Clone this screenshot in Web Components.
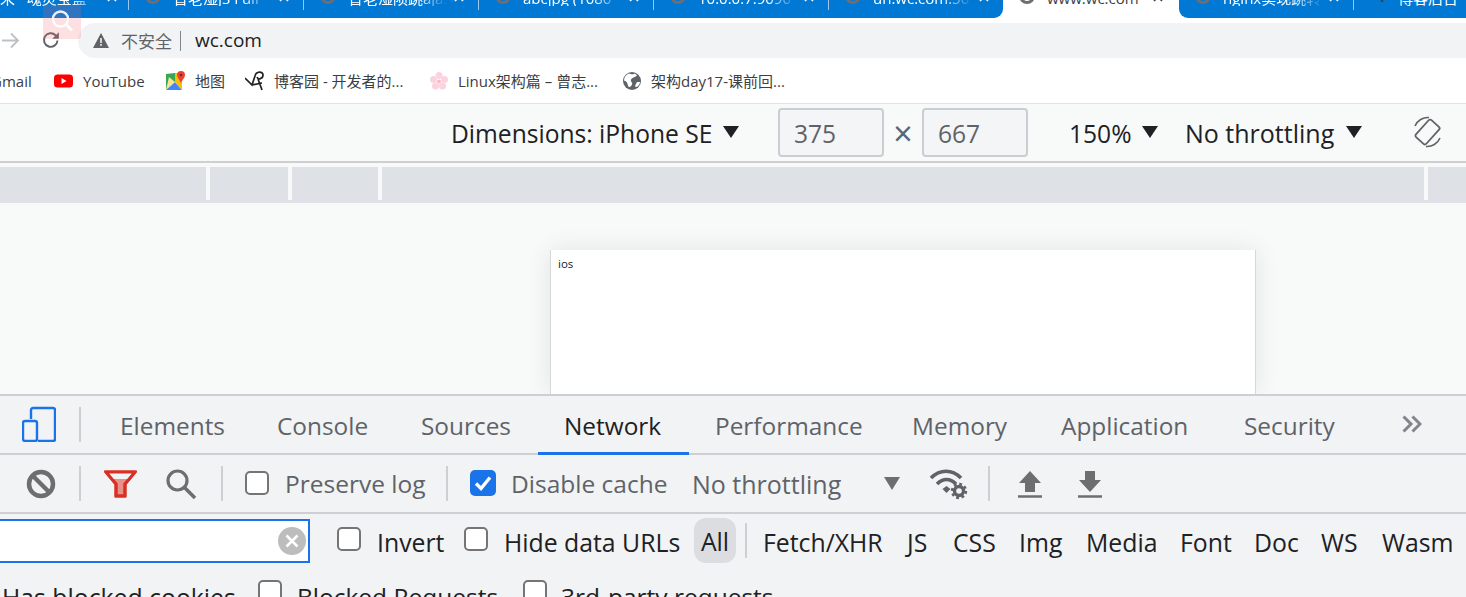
<!DOCTYPE html>
<html>
<head>
<meta charset="utf-8">
<title>DevTools</title>
<style>
  html, body { margin: 0; height: 597px; overflow: hidden; background: #fff; }
  body { font-family: "Open Sans", "Noto Sans CJK SC", sans-serif; }
</style>
</head>
<body>
<browser-tabs></browser-tabs>
<browser-toolbar></browser-toolbar>
<bookmark-bar></bookmark-bar>
<device-bar></device-bar>
<media-ruler></media-ruler>
<emulated-viewport>ios</emulated-viewport>
<devtools-tabs></devtools-tabs>
<network-toolbar></network-toolbar>
<network-filter></network-filter>

<script>
"use strict";
(() => {
  var BaseControl = class extends HTMLElement {
    constructor() {
      super();
      this.shadow = this.attachShadow({ mode: "open" });
    }
    connectedCallback() {
      this.render();
    }
    render() {
    }
  };

  var GLOBE = '<svg width="16" height="16" viewBox="0 0 16 16"><circle cx="8" cy="8" r="6.5" fill="none" stroke="#6b6f73" stroke-width="3"/></svg>';
  var CLOSE = '<svg width="10" height="10" viewBox="0 0 10 10"><path d="M1 1l8 8M9 1l-8 8" stroke="currentColor" stroke-width="1.6"/></svg>';

  // tab strip, cut off at the top of the window
  var BrowserTabs = class extends BaseControl {
    render() {
      var tabs = [
        ["曾老湿JS Full", 0],
        ["曾老湿陨跳ajax", 0],
        ["abcjpg (1080", 0],
        ["10.0.0.7:9090", 0],
        ["un.wc.com:50", 1],
        ["www.wc.com", 2],
        ["nginx实现跳转", 3],
      ];
      var html = tabs.map(function (t) {
        var cls = t[1] === 1 ? "tab before" : t[1] === 2 ? "tab active" : t[1] === 3 ? "tab after" : "tab";
        var sep = t[1] === 0 || t[1] === 3 ? '<i class="sep"></i>' : "";
        return '<div class="' + cls + '"><span class="ic">' + GLOBE + '</span><span class="t">' + t[0] + '</span><span class="x">' + CLOSE + "</span></div>" + sep;
      }).join("");
      this.shadow.innerHTML = `
      <style>
        :host { display: flex; height: 18px; overflow: hidden; background: #fff; color: #fff; font-size: 15px; line-height: 15px; }
        .tab { flex: none; box-sizing: border-box; width: 174px; height: 18px; background: #0078d4; display: flex; align-items: flex-end; position: relative; padding-left: 16px; }
        .first { width: 128px; padding-left: 0; }
        .active { width: 176px; background: #fff; color: #3c4043; padding-left: 16px; }
        .before { width: 174px; border-bottom-right-radius: 9px; }
        .after { border-bottom-left-radius: 9px; }
        .ic { flex: none; width: 16px; margin-bottom: 14px; display: flex; }
        .t { flex: none; width: 99px; margin: 0 0 12px 12px; white-space: nowrap; overflow: hidden; -webkit-mask-image: linear-gradient(90deg, #000 70%, transparent); mask-image: linear-gradient(90deg, #000 70%, transparent); }
        .active .t { -webkit-mask-image: none; mask-image: none; }
        .first .t { width: 100px; margin-left: 0; }
        .x { flex: none; width: 10px; margin: 0 0 16px 7px; display: flex; }
        .sep { flex: none; width: 1px; height: 18px; background: linear-gradient(#9cc6ea 0 10px, #0078d4 10px); }
        .last { flex: 1; background: #0078d4; display: flex; align-items: flex-end; padding-left: 16px; }
        .last .t { -webkit-mask-image: none; mask-image: none; width: 70px; }
      </style>
      <div class="tab first"><span class="t">来&nbsp;&nbsp;&nbsp;魂灵宝盒</span><span class="x">${CLOSE}</span></div><i class="sep"></i>
      ${html}
      <div class="last"><span class="ic"><svg width="16" height="16" viewBox="0 0 16 16"><path d="M2 2l5 6 5-5v11" fill="none" stroke="#3c4043" stroke-width="2.4"/></svg></span><span class="t">博客后台</span></div>`;
    }
  };

  var BrowserToolbar = class extends BaseControl {
    render() {
      this.shadow.innerHTML = `
      <style>
        :host { display: flex; height: 40px; align-items: flex-end; position: relative; background: #fff; }
        .fwd { width: 19px; height: 19px; margin: 0 0 8px 1px; }
        .reload { width: 20px; height: 20px; margin: 0 0 8px 21px; }
        .omni { flex: 1; height: 35px; margin-left: 17px; padding-left: 15px; background: #f1f3f4; border-radius: 18px 0 0 18px; display: flex; align-items: center; }
        .warn { flex: none; width: 16px; height: 15px; }
        .ns { font-size: 17px; color: #5f6368; margin-left: 12px; white-space: nowrap; }
        .bar { width: 1px; height: 20px; background: #80868b; margin: 0 14px 0 8px; }
        .host { font-size: 19px; line-height: 24px; margin-top: -2px; color: #202124; }
        .ext { position: absolute; left: 43px; top: -13px; width: 38px; height: 34px; background: rgba(240, 100, 110, .2); border-radius: 3px; }
      </style>
      <svg class="fwd" viewBox="0 0 19 19"><path d="M1 9.5h16M10 2.5l7 7-7 7" fill="none" stroke="#bdc1c6" stroke-width="1.8"/></svg>
      <svg class="reload" viewBox="0 0 20 20"><path d="M16.5 10.5a6.8 6.8 0 1 1-2-5.3L17 7.5" fill="none" stroke="#5f6368" stroke-width="1.9"/><path d="M17.8 2.2v6.5h-6.5z" fill="#5f6368"/></svg>
      <div class="omni">
        <svg class="warn" viewBox="0 0 16 15"><path d="M8 0l8 15H0z" fill="#5f6368"/><path d="M7.2 5h1.6v5H7.200zM7.200 11h1.600v1.800H7.200z" fill="#f1f3f4"/></svg>
        <span class="ns">不安全</span><span class="bar"></span><span class="host">wc.com</span>
      </div>
      <svg class="ext" viewBox="0 0 38 34"><circle cx="17.500" cy="14" r="7.500" fill="none" stroke="#fff" stroke-opacity=".9" stroke-width="2.400"/><path d="M23 19.500l6 6" stroke="#fff" stroke-opacity=".9" stroke-width="3"/></svg>`;
    }
  };

  var BookmarkBar = class extends BaseControl {
    render() {
      this.shadow.innerHTML = `
      <style>
        :host { display: flex; box-sizing: border-box; height: 46px; align-items: center; background: #fff; border-bottom: 1px solid #e1e3e4; font-size: 15px; color: #3c4043; white-space: nowrap; overflow: hidden; }
        .b { flex: none; display: flex; align-items: center; }
        svg { flex: none; margin-right: 9px; }
      </style>
      <span class="b" style="margin-left:-9px;width:62px">Gmail</span>
      <span class="b" style="width:112px">
        <svg width="21" height="20" viewBox="0 0 21 20"><rect x="1" y="3.500" width="19" height="13" rx="3.500" fill="#f00"/><path d="M8.500 7v6l5-3z" fill="#fff"/></svg>YouTube</span>
      <span class="b" style="width:80px">
        <svg width="21" height="20" viewBox="0 0 21 20"><path d="M1 3l9-1v9l-9 8z" fill="#34a853"/><path d="M1 19l9-8 7 8z" fill="#4285f4"/><path d="M10 2h7v17l-7-8z" fill="#fbbc04"/><path d="M4 6l6 5-9 8z" fill="#fde293"/><path d="M16 0a4 4 0 0 1 4 4c0 3-3 5-4 8-1-3-4-5-4-8a4 4 0 0 1 4-4z" fill="#ea4335"/><circle cx="16" cy="4" r="1.300" fill="#8a1f16"/></svg>地图</span>
      <span class="b" style="width:184px">
        <svg width="20" height="20" viewBox="0 0 20 20"><path d="M0 7l7 7 3-9c1-5 8-5 8-1s-5 5-6 2M13 8l4 11M7 14l10-2" fill="none" stroke="#222" stroke-width="1.700"/></svg>博客园 - 开发者的...</span>
      <span class="b" style="width:193px">
        <svg width="20" height="20" viewBox="0 0 20 20" fill="#fbd3de"><circle cx="10" cy="4.500" r="3.500"/><circle cx="4.500" cy="8.500" r="3.500"/><circle cx="15.500" cy="8.500" r="3.500"/><circle cx="6.500" cy="15" r="3.500"/><circle cx="13.500" cy="15" r="3.500"/><circle cx="10" cy="10.500" r="2" fill="#f7b8c8"/></svg>Linux架构篇 – 曾志...</span>
      <span class="b">
        <svg width="20" height="20" viewBox="0 0 20 20"><circle cx="10" cy="10" r="9" fill="#5f6368"/><path d="M7 2.500c2 1 5 1 6 0l2 2c-2 2-5 2-6 4s2 3 1 5-3 4-4 1-1-4-4-5c0-3 2-6 5-7zM15 11l3 0c0 2-2 5-4 5s0-3 1-5z" fill="#fff"/></svg>架构day17-课前回...</span>`;
    }
  };

  var TRI = '<svg class="tri" width="16" height="12" viewBox="0 0 16 12"><path d="M0 0h16l-8 12z" fill="#202124"/></svg>';

  var DeviceBar = class extends BaseControl {
    render() {
      this.shadow.innerHTML = `
      <style>
        :host { display: flex; box-sizing: border-box; height: 59px; padding-bottom: 1px; align-items: center; background: #f8f9f9; border-bottom: 2px solid #cdcfd3; font-size: 24.600px; color: #202124; white-space: nowrap; }
        span { flex: none; padding-top: 2px; }
        .tri { flex: none; margin-top: -1px; }
        .in { box-sizing: border-box; width: 106px; height: 49px; background: #f4f5f6; border: 2px solid #cbcdd0; border-radius: 4px; color: #5f6368; padding: 0 0 0 14px; line-height: 47px; }
        .times { width: 38px; text-align: center; color: #4d6a85; font-size: 34px; line-height: 49px; }
        .rot { flex: none; margin-left: 50px; }
      </style>
      <span style="margin-left:451px;width:272px">Dimensions: iPhone SE</span>${TRI}
      <span class="in" style="margin-left:39px">375</span><span class="times">×</span><span class="in">667</span>
      <span style="margin-left:41px;width:73px">150%</span>${TRI}
      <span style="margin-left:27px;width:161px;font-size:25px">No throttling</span>${TRI}
      <svg class="rot" width="31" height="32" viewBox="0 0 31 32"><g fill="none" stroke="#5f6368"><rect x="8.500" y="4.500" width="14" height="23" rx="2" transform="rotate(42 15.500 16)" stroke-width="1.800"/><path d="M3 10a14 14 0 0 1 14-8.500M28 22a14 14 0 0 1-14 8.500" stroke-width="1.600"/></g></svg>`;
    }
  };

  var MediaRuler = class extends BaseControl {
    render() {
      var w = [206, 78, 86, 1042];
      this.shadow.innerHTML = `
      <style>
        :host { display: block; padding-top: 4px; background: #f8f9f9; }
        .r { display: flex; height: 36px; background: #dee1e6; }
        .s { flex: none; }
        .g { flex: none; width: 4px; height: 33px; background: #f8f9f9; }
      </style>
      <div class="r">${w.map(function (x) { return '<div class="s" style="width:' + x + 'px"></div><div class="g"></div>'; }).join("")}</div>`;
    }
  };

  var EmulatedViewport = class extends BaseControl {
    render() {
      this.shadow.innerHTML = `
      <style>
        :host { display: block; box-sizing: border-box; height: 191px; padding: 47px 0 0 550px; background: #f8f9f9; overflow: hidden; }
        .page { box-sizing: border-box; width: 706px; height: 144px; padding: 6px 0 0 7px; background: #fff; border: solid #d6d7d9; border-width: 0 1px; box-shadow: 0 0 24px rgba(0, 0, 0, .09); font-size: 11.500px; line-height: 16px; color: #202124; }
      </style>
      <div class="page"><slot></slot></div>`;
    }
  };

  var DevtoolsTabs = class extends BaseControl {
    render() {
      var tabs = [["Elements", 157], ["Console", 144], ["Sources", 143], ["Network", 151], ["Performance", 197], ["Memory", 149], ["Application", 183], ["Security", 157]];
      this.shadow.innerHTML = `
      <style>
        :host { display: flex; box-sizing: border-box; height: 61px; background: #f1f3f5; border: solid #cdcfd3; border-width: 2px 0; font-size: 24.400px; color: #5f6368; white-space: nowrap; }
        .dev { flex: none; margin: 10px 23px 0 22px; }
        .sep { flex: none; width: 2px; height: 35px; margin: 11px 13px 0 0; background: #cdcfd3; }
        .tab { flex: none; box-sizing: border-box; height: 57px; padding: 11px 0 0 26px; line-height: 37px; position: relative; }
        .on { color: #202124; }
        .on::after { content: ""; position: absolute; left: 0; right: 0; bottom: -2px; height: 3px; background: #1a73e8; }
        .more { flex: none; margin: 19px 0 0 27px; }
      </style>
      <svg class="dev" width="34" height="36" viewBox="0 0 34 36"><g fill="none" stroke="#1a73e8" stroke-width="2.400"><path d="M9 13V4a2 2 0 0 1 2-2h20a2 2 0 0 1 2 2v29a2 2 0 0 1-2 2H16"/><rect x="1" y="15" width="14" height="20" rx="2"/></g></svg>
      <i class="sep"></i>
      ${tabs.map(function (t) { return '<div class="tab' + (t[0] === "Network" ? " on" : "") + '" style="width:' + t[1] + 'px">' + t[0] + "</div>"; }).join("")}
      <svg class="more" width="20" height="18" viewBox="0 0 20 18"><path d="M1.500 1.500L9 9l-7.500 7.500M10.500 1.500L18 9l-7.500 7.500" fill="none" stroke="#80868b" stroke-width="3"/></svg>`;
    }
  };

  var DtCheck = class extends BaseControl {
    render() {
      var mark = this.hasAttribute("checked") ? '<svg viewBox="0 0 26 26"><path d="M6 13.500l5 5 9-11" fill="none" stroke="#fff" stroke-width="3.400"/></svg>' : "";
      this.shadow.innerHTML = `
      <style>
        :host { display: inline-flex; flex: none; align-items: center; white-space: nowrap; }
        .box { flex: none; box-sizing: border-box; width: 24px; height: 24px; margin: 0 var(--box-gap, 16px) var(--box-shift, 0) 0; background: #fff; border: 2px solid #757575; border-radius: 5px; }
        :host([checked]) .box { width: 26px; height: 26px; margin-right: 15px; background: #1a73e8; border: 0; }
        svg { display: block; }
      </style>
      <span class="box">${mark}</span><slot></slot>`;
    }
  };

  var NetworkToolbar = class extends BaseControl {
    render() {
      this.shadow.innerHTML = `
      <style>
        :host { display: flex; box-sizing: border-box; height: 59px; align-items: center; background: #f1f3f5; border-bottom: 2px solid #cdcfd3; font-size: 24.500px; color: #5f6368; white-space: nowrap; }
        svg { flex: none; }
        .sep { flex: none; width: 2px; height: 35px; background: #cdcfd3; }
        dt-check { color: #5f6368; --box-shift: 2px; }
      </style>
      <svg style="margin-left:26px" width="30" height="30" viewBox="0 0 30 30"><circle cx="15" cy="15" r="12" fill="none" stroke="#6e6e6e" stroke-width="4.500"/><path d="M7 7l16 16" stroke="#6e6e6e" stroke-width="4.500"/></svg>
      <i class="sep" style="margin-left:23px"></i>
      <svg style="margin-left:23px" width="33" height="28" viewBox="0 0 33 28"><path d="M2 2h29L21 14v12h-9V14z" fill="#e8908a" stroke="#d93025" stroke-width="3" stroke-linejoin="round"/><path d="M2 2h29l-6 7H8z" fill="#f1f3f5" stroke="#d93025" stroke-width="0"/><path d="M2 2h29L21 14v12h-9V14z" fill="none" stroke="#d93025" stroke-width="3"/></svg>
      <svg style="margin-left:28px" width="32" height="32" viewBox="0 0 32 32"><circle cx="12.500" cy="12.500" r="9.500" fill="none" stroke="#6e6e6e" stroke-width="3.200"/><path d="M19.500 19.500L30 30" stroke="#6e6e6e" stroke-width="3.600"/></svg>
      <i class="sep" style="margin-left:24px"></i>
      <dt-check style="margin-left:22px;width:201px">Preserve log</dt-check>
      <i class="sep"></i>
      <dt-check checked style="margin-left:22px;width:222px">Disable cache</dt-check>
      <span style="flex:none;width:192px;font-size:25px">No throttling</span>
      <svg width="16" height="13" viewBox="0 0 16 13"><path d="M0 0h16l-8 13z" fill="#6e6e6e"/></svg>
      <svg style="margin-left:29px" width="40" height="32" viewBox="0 0 40 32"><g fill="none" stroke="#5f6368" stroke-width="3.600"><path d="M2 10c9-9 21-9 30 0M8 16c6-6 13-6 19 0"/></g><path d="M13.500 21l4-3 4 3-4 4z" fill="#5f6368"/><circle cx="30" cy="23" r="4.500" fill="none" stroke="#5f6368" stroke-width="3.400"/><circle cx="30" cy="23" r="7" fill="none" stroke="#5f6368" stroke-width="2.400" stroke-dasharray="2.800 2.700"/></svg>
      <i class="sep" style="margin-left:19px"></i>
      <svg style="margin-left:28px" width="24" height="28" viewBox="0 0 24 28"><path d="M12 1L23 13H17V22H7V13H1z" fill="#6e6e6e"/><path d="M0 26.500h24" stroke="#6e6e6e" stroke-width="2.500"/></svg>
      <svg style="margin-left:36px" width="24" height="28" viewBox="0 0 24 28"><path d="M7 1h10v9h6L12 22 1 10h6z" fill="#6e6e6e"/><path d="M0 26.500h24" stroke="#6e6e6e" stroke-width="2.500"/></svg>`;
    }
  };

  var NetworkFilter = class extends BaseControl {
    render() {
      var types = [["Fetch/XHR", 144], ["JS", 46], ["CSS", 66], ["Img", 67], ["Media", 94], ["Font", 74], ["Doc", 67], ["WS", 61], ["Wasm", 84]];
      this.shadow.innerHTML = `
      <style>
        :host { display: block; background: #f1f3f5; font-size: 24.800px; color: #202124; white-space: nowrap; }
        .row { display: flex; align-items: center; height: 53px; }
        .row2 { height: 30px; margin-top: 13px; align-items: flex-start; }
        .row dt-check { padding-top: 2px; --box-shift: 5px; }
        .row2 dt-check { padding-top: 0; --box-shift: 0; align-items: flex-start; font-size: 24.500px; }
        .search { flex: none; box-sizing: border-box; width: 310px; height: 44px; background: #fff; border: 2px solid #1a73e8; border-left: 0; display: flex; align-items: center; justify-content: flex-end; padding-right: 2px; }
        .all { flex: none; box-sizing: border-box; width: 42px; height: 45px; line-height: 47px; text-align: center; background: #dcdde0; border-radius: 12px; }
        .sep { flex: none; width: 2px; height: 35px; margin: 0 16px 0 9px; background: #cdcfd3; }
        .ty { flex: none; padding-top: 2px; }
        .cookies { flex: none; box-sizing: border-box; width: 258px; padding-left: 2px; }
      </style>
      <div class="row">
        <div class="search"><svg width="28" height="28" viewBox="0 0 28 28"><circle cx="14" cy="14" r="14" fill="#bdbdbd"/><path d="M8.500 8.500l11 11M19.500 8.500l-11 11" stroke="#fff" stroke-width="2.600"/></svg></div>
        <dt-check style="margin-left:27px;width:127px">Invert</dt-check>
        <dt-check style="width:230px">Hide data URLs</dt-check>
        <div class="all">All</div><i class="sep"></i>
        ${types.map(function (t) { return '<span class="ty" style="width:' + t[1] + 'px">' + t[0] + "</span>"; }).join("")}
      </div>
      <div class="row row2">
        <span class="cookies">Has blocked cookies</span>
        <dt-check style="width:265px;--box-gap:15px">Blocked Requests</dt-check>
        <dt-check style="--box-gap:14px">3rd-party requests</dt-check>
      </div>`;
    }
  };

  customElements.define("dt-check", DtCheck);
  customElements.define("browser-tabs", BrowserTabs);
  customElements.define("browser-toolbar", BrowserToolbar);
  customElements.define("bookmark-bar", BookmarkBar);
  customElements.define("device-bar", DeviceBar);
  customElements.define("media-ruler", MediaRuler);
  customElements.define("emulated-viewport", EmulatedViewport);
  customElements.define("devtools-tabs", DevtoolsTabs);
  customElements.define("network-toolbar", NetworkToolbar);
  customElements.define("network-filter", NetworkFilter);
})();
</script>
</body>
</html>
